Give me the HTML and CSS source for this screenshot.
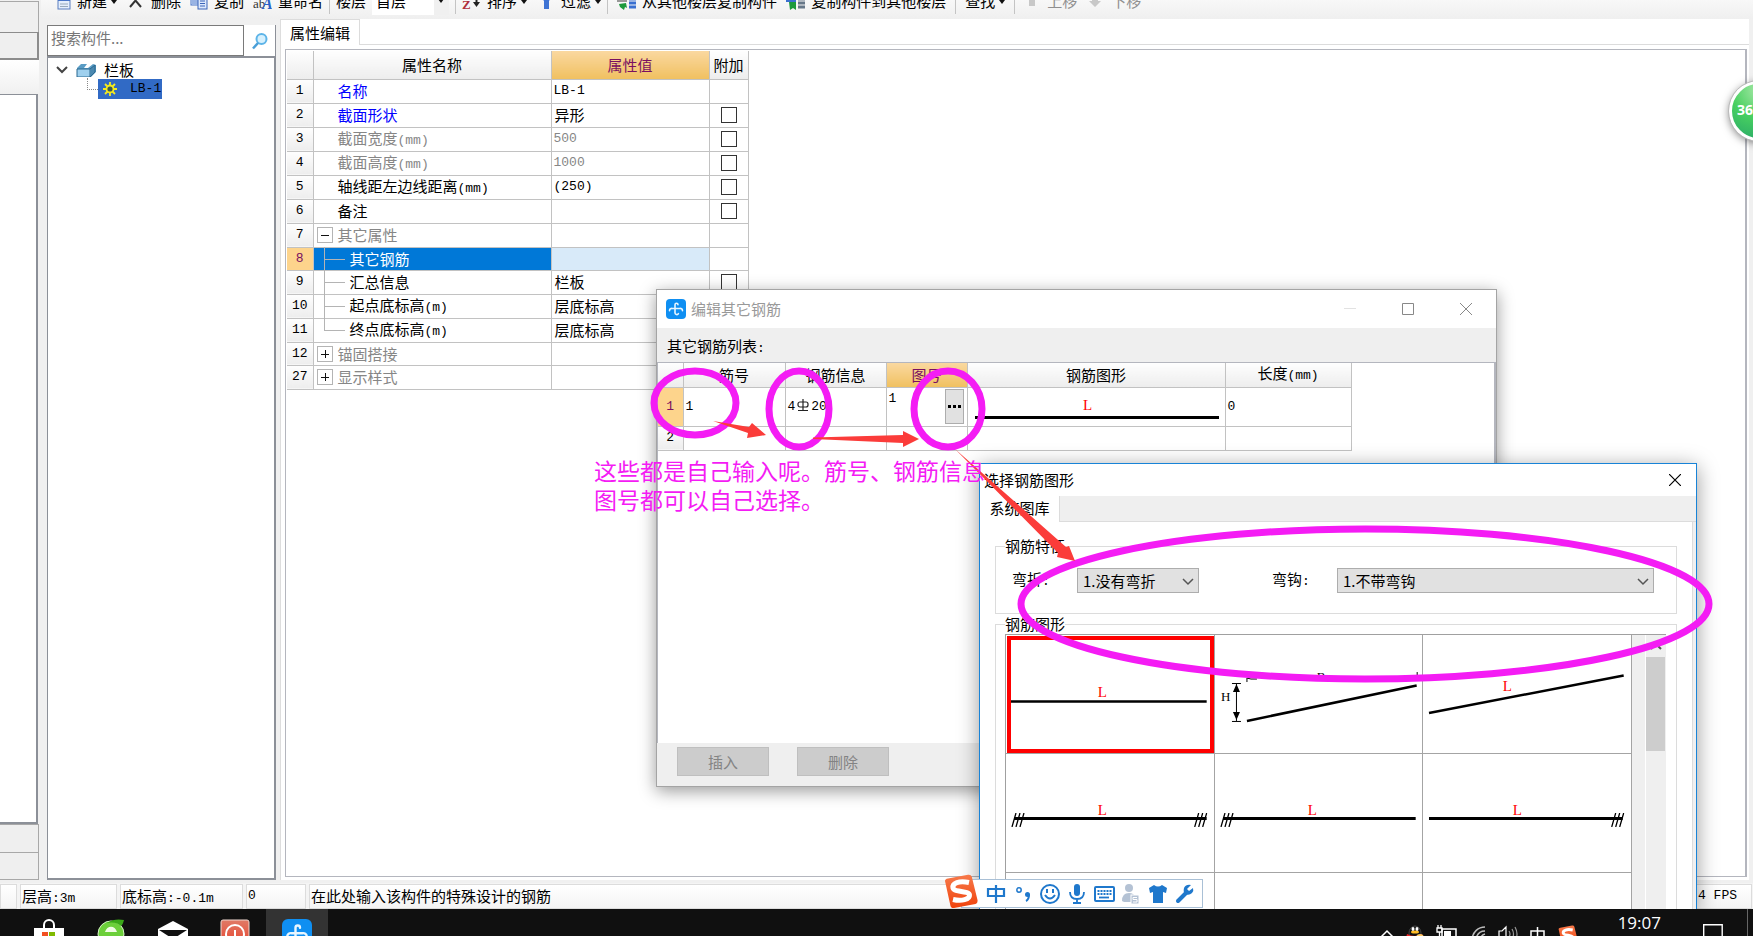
FILE: index.html
```html
<!DOCTYPE html>
<html lang="zh-CN">
<head>
<meta charset="utf-8">
<title>属性编辑</title>
<link rel="stylesheet" href="styles.css">
</head>
<body>
<svg class="defs" width="0" height="0" aria-hidden="true">
  <defs>
    <linearGradient id="sg" x1="0" y1="0" x2="0" y2="1"><stop offset="0" stop-color="#f7794a"/><stop offset="1" stop-color="#f0430c"/></linearGradient>
    <linearGradient id="rg" x1="0" y1="0" x2="0" y2="1"><stop offset="0" stop-color="#e07a66"/><stop offset="1" stop-color="#e8402a"/></linearGradient>
    <symbol id="caret" viewBox="0 0 6 4"><path d="M0 0h6L3 4z" fill="#111"/></symbol>
    <symbol id="chev" viewBox="0 0 12 8"><path d="M1 1l5 5 5-5" fill="none" stroke="#555" stroke-width="1.5"/></symbol>
    <symbol id="app" viewBox="0 0 20 20"><rect width="20" height="20" rx="4" fill="#0f8ff2"/><path d="M12 5.800a1.500 1.500 0 0 0-3 0V14a1.800 1.800 0 0 0 3.400 .6M3.500 11.800c0-2 1.500-2.600 3-2.300h7c1.500-.3 3 .3 3 2.300" fill="none" stroke="#e8f6ff" stroke-width="1.600" stroke-linecap="round"/></symbol>
    <symbol id="sogou" viewBox="0 0 34 34"><path d="M1 7Q1 5 4 4.500L24 .8q3-.5 3.800 2L33.500 26q.5 3-2 4L10 34q-3 .5-3.500-2z" fill="url(#sg)"/><path d="M25 8.500C15 6.500 8 9 9 14c1 4.500 16 2.500 16.500 7 .4 4.500-8 6.500-16.500 4.500" fill="none" stroke="#fff" stroke-width="5"/></symbol>
    <symbol id="hatch" viewBox="0 0 14 14"><path d="M1 14L5 0M5 14L9 0M9 14L13 0" stroke="#000" stroke-width="1.300" fill="none"/></symbol>
  </defs>
</svg>

<main class="main">
  <aside class="dock">
    <div class="dock-btn"></div>
    <div class="dock-btn dark"></div>
    <div class="dock-head"></div>
    <div class="dock-list"></div>
    <div class="dock-btn"></div>
    <div class="dock-btn"></div>
  </aside>

  <div class="work">
    <nav class="toolbar">
      <div class="tools">
        <button class="tool"><svg width="14" height="20" viewBox="0 0 14 20"><rect x="1" y="3" width="12" height="15" fill="#e4eefc" stroke="#5a7fc0"/><path d="M1 4h12v6H1z" fill="#4a76c8"/><path d="M3 13h8M3 15.500h8" stroke="#9ab"/></svg>新建<svg class="car" width="6" height="4"><use href="#caret"/></svg></button>
        <button class="tool"><svg width="19" height="16" viewBox="0 0 19 16"><path d="M4 14L15 1M4 1l11 13" stroke="#333" stroke-width="2"/></svg>删除</button>
        <button class="tool"><svg width="18" height="18" viewBox="0 0 18 18"><rect x="1" y="2" width="8" height="11" fill="#e7f0ff" stroke="#4a76c8"/><path d="M2 9h6M2 11h6" stroke="#4a76c8"/><rect x="8" y="5" width="9" height="12" fill="#dce8fc" stroke="#3a64b8"/><path d="M10 9h5M10 11.500h5M10 14h5" stroke="#3a64b8"/></svg>复制</button>
        <button class="tool"><svg width="19" height="18" viewBox="0 0 19 18"><text x="0" y="16" class="ic-ab">ab</text><text x="9" y="17" class="ic-a">A</text></svg>重命名</button>
        <span class="sep"></span>
        <label class="tool floor">楼层<select aria-label="楼层"><option>首层</option></select><svg class="floor-car" width="6" height="4"><use href="#caret"/></svg></label>
        <span class="sep"></span>
        <button class="tool"><svg width="19" height="18" viewBox="0 0 19 18"><text x="0" y="17" class="ic-z">Z</text><path d="M14.500 2v10" stroke="#222" stroke-width="2"/><path d="M11 10h7l-3.500 5z" fill="#222"/></svg>排序<svg class="car" width="6" height="4"><use href="#caret"/></svg></button>
        <button class="tool"><svg width="19" height="18" viewBox="0 0 19 18"><path d="M2 1h16l-5 8v8H8V9z" fill="#3f74d4"/></svg>过滤<svg class="car" width="6" height="4"><use href="#caret"/></svg></button>
        <span class="sep"></span>
        <button class="tool"><svg width="22" height="20" viewBox="0 0 22 20"><rect x="3" y="4" width="10" height="7" fill="#999"/><path d="M5 13l7-1 1 5-2-1-1 3-4-3z" fill="#1c9a3c"/><path d="M15 4h7M15 8h7M15 12h7M15 16h7" stroke="#3a70d0" stroke-width="3"/></svg>从其他楼层复制构件</button>
        <button class="tool"><svg width="19" height="20" viewBox="0 0 19 20"><rect x="0" y="4" width="10" height="7" fill="#3a70d0"/><path d="M3 11h7v8l-3-2-3 2z" fill="#1c9a3c"/><path d="M12 4h7M12 8h7M12 12h7M12 16h7" stroke="#667788" stroke-width="3"/></svg>复制构件到其他楼层</button>
        <span class="sep wide"></span>
        <button class="tool">查找<svg class="car" width="6" height="4"><use href="#caret"/></svg></button>
        <span class="sep wide"></span>
        <button class="tool off"><svg width="17" height="16" viewBox="0 0 17 16"><path d="M8 1l6 6h-3v6H5V7H2z" fill="#c8c8c8"/></svg>上移</button>
        <button class="tool off"><svg width="19" height="16" viewBox="0 0 19 16"><path d="M9 14l6-6h-3V2H6v6H3z" fill="#c8c8c8"/></svg>下移</button>
      </div>
    </nav>

    <div class="panels">
      <section class="tree">
        <div class="search">
          <input type="text" placeholder="搜索构件..." aria-label="搜索构件">
          <button aria-label="搜索"><svg width="18" height="18" viewBox="0 0 18 18"><circle cx="10.500" cy="7" r="5" fill="#d6f0fd" stroke="#5db4e8" stroke-width="2"/><path d="M7 11l-5 5.500" stroke="#4a9fd8" stroke-width="2.500"/></svg></button>
        </div>
        <ul class="nodes">
          <li class="node"><svg width="12" height="8" viewBox="0 0 12 8"><path d="M1 1l5 5 5-5" fill="none" stroke="#444" stroke-width="2"/></svg><svg width="20" height="14" viewBox="0 0 20 14"><path d="M1 5l4-4h6l-3 4h4l5-4 3 1v7l-5 5H1z" fill="#5a9cc4"/><path d="M1 6h13v8H1z" fill="#9fd0ee" stroke="#2a6890"/><path d="M14 6l5-4v7l-5 5" fill="#4a88b0" stroke="#2a6890"/></svg><span>栏板</span></li>
          <li class="node child"><i class="elbow"></i><span class="picked"><svg width="14" height="14" viewBox="0 0 14 14"><path d="M7 0v14M0 7h14M2 2l10 10M12 2L2 12" stroke="#f4ea20" stroke-width="1.800"/><circle cx="7" cy="7" r="3.500" fill="#3a5a50" stroke="#f4ea20" stroke-width="1.800"/></svg><b class="lat">LB-1</b></span></li>
        </ul>
      </section>

      <section class="props">
        <div class="tabs"><button class="tab">属性编辑</button></div>
        <div class="sheet">
          <table class="grid attr">
            <colgroup><col class="c-no"><col class="c-name"><col class="c-val"><col class="c-add"></colgroup>
            <thead><tr><th></th><th>属性名称</th><th class="hot">属性值</th><th>附加</th></tr></thead>
            <tbody>
              <tr><th class="lat">1</th><td class="nm blue">名称</td><td class="lat">LB-1</td><td></td></tr>
              <tr><th class="lat">2</th><td class="nm blue">截面形状</td><td>异形</td><td class="ck"><input type="checkbox" aria-label="截面形状"></td></tr>
              <tr><th class="lat">3</th><td class="nm gray">截面宽度<span class="lat">(mm)</span></td><td class="lat gray">500</td><td class="ck"><input type="checkbox" aria-label="截面宽度"></td></tr>
              <tr><th class="lat">4</th><td class="nm gray">截面高度<span class="lat">(mm)</span></td><td class="lat gray">1000</td><td class="ck"><input type="checkbox" aria-label="截面高度"></td></tr>
              <tr><th class="lat">5</th><td class="nm">轴线距左边线距离<span class="lat">(mm)</span></td><td class="lat">(250)</td><td class="ck"><input type="checkbox" aria-label="轴线距左边线距离"></td></tr>
              <tr><th class="lat">6</th><td class="nm">备注</td><td></td><td class="ck"><input type="checkbox" aria-label="备注"></td></tr>
              <tr><th class="lat">7</th><td class="nm gray"><button class="exp minus" aria-label="折叠"></button>其它属性</td><td></td><td></td></tr>
              <tr class="cur"><th class="lat">8</th><td class="nm sub">其它钢筋</td><td class="soft"></td><td></td></tr>
              <tr><th class="lat">9</th><td class="nm sub">汇总信息</td><td>栏板</td><td class="ck"><input type="checkbox" aria-label="汇总信息"></td></tr>
              <tr><th class="lat">10</th><td class="nm sub">起点底标高<span class="lat">(m)</span></td><td>层底标高</td><td></td></tr>
              <tr><th class="lat">11</th><td class="nm sub last">终点底标高<span class="lat">(m)</span></td><td>层底标高</td><td></td></tr>
              <tr><th class="lat">12</th><td class="nm gray"><button class="exp plus" aria-label="展开"></button>锚固搭接</td><td></td><td></td></tr>
              <tr><th class="lat">27</th><td class="nm gray"><button class="exp plus" aria-label="展开"></button>显示样式</td><td></td><td></td></tr>
            </tbody>
          </table>
        </div>
      </section>
    </div>
  </div>
</main>

<footer class="status">
  <span class="st s0"></span>
  <span class="st s1">层高<span class="lat">:3m</span></span>
  <span class="st s2">底标高<span class="lat">:-0.1m</span></span>
  <span class="st s3 lat">0</span>
  <span class="st s4"><span>在此处输入该构件的特殊设计的钢筋</span><span class="lat">4 FPS</span></span>
</footer>

<footer class="taskbar">
  <div class="apps">
    <button class="app-btn" aria-label="应用商店"><svg width="30" height="32" viewBox="0 0 30 32"><path d="M10 9V6a5 5 0 0 1 10 0v3" fill="none" stroke="#fff" stroke-width="2"/><path d="M0 9h30v20H0z" fill="#fff"/><path d="M8 13h6v6H8z" fill="#f25022"/><path d="M15 13h6v6h-6z" fill="#7fba00"/></svg></button>
    <button class="app-btn" aria-label="浏览器"><svg width="30" height="32" viewBox="0 0 30 32"><circle cx="15" cy="15" r="13" fill="#6ccf3a" stroke="#d8f5c8" stroke-width="1"/><path d="M9 13c2-7 10-7 12 0zM8 17h19v3H11c2 4 8 5 12 2" fill="#f0fce4"/><path d="M10 4C17 0 23 0 28 1c-1 4-2 5-3 6-4-4-9-4-15-3z" fill="#3aa818"/></svg></button>
    <button class="app-btn" aria-label="邮件"><svg width="30" height="32" viewBox="0 0 30 32"><path d="M0 10L15 2l15 8v17H0z" fill="#fff"/><path d="M1 11h28l-14 9z" fill="#101010"/></svg></button>
    <button class="app-btn" aria-label="电源"><svg width="30" height="32" viewBox="0 0 30 32"><rect x="1" y="1" width="28" height="28" rx="2" fill="url(#rg)" stroke="#f0d8d0"/><circle cx="15" cy="15" r="9" fill="none" stroke="#fff" stroke-width="2"/><path d="M15 11v8" stroke="#fff" stroke-width="2"/></svg></button>
    <button class="app-btn on" aria-label="广联达"><svg width="30" height="30"><use href="#app"/></svg></button>
  </div>
  <div class="tray">
    <svg width="14" height="10" viewBox="0 0 14 10"><path d="M1 8l6-6 6 6" fill="none" stroke="#fff" stroke-width="1.500"/></svg>
    <svg width="18" height="20" viewBox="0 0 18 20"><ellipse cx="9" cy="8" rx="6" ry="7" fill="#111" stroke="#444"/><ellipse cx="7" cy="4" rx="1.500" ry="2" fill="#fff"/><ellipse cx="11" cy="4" rx="1.500" ry="2" fill="#fff"/><path d="M1 9q8 4 15 0l1 4H0z" fill="#e22"/><ellipse cx="9" cy="7" rx="4" ry="1.500" fill="#fb2"/><circle cx="14" cy="13" r="4" fill="#fc6"/></svg>
    <svg width="22" height="18" viewBox="0 0 22 18"><path d="M6 4h14v10H6z" fill="none" stroke="#fff" stroke-width="1.500"/><path d="M8 6h7v8H8z" fill="#fff"/><path d="M1 3h5v4H1zM2 0v3M5 0v3M3.500 7v6" fill="none" stroke="#fff" stroke-width="1.300"/></svg>
    <svg width="16" height="18" viewBox="0 0 16 18"><path d="M2 14C3 7 8 2 15 2M6 14c1-5 4-8 9-8M10 14c1-3 2-4 5-5" fill="none" stroke="#bbb" stroke-width="1.500"/></svg>
    <svg width="20" height="18" viewBox="0 0 20 18"><path d="M1 6h3l4-4v14l-4-4H1z" fill="none" stroke="#fff" stroke-width="1.200"/><path d="M11 6q2 3 0 6M14 4q3 5 0 10M17 2q4 7 0 14" fill="none" stroke="#999" stroke-width="1.200"/></svg>
    <svg width="16" height="20" viewBox="0 0 16 20"><path d="M1 6h13v7H1zM7.500 2v16" fill="none" stroke="#fff" stroke-width="1.500"/></svg>
    <svg width="20" height="20"><use href="#sogou"/></svg>
    <time>19:07</time>
    <svg class="note" width="20" height="20" viewBox="0 0 20 20"><path d="M.7.700h18.500V16H.7z" fill="none" stroke="#fff" stroke-width="1.400"/></svg>
    <i class="peek"></i>
  </div>
</footer>

<section class="win rebar">
  <header class="title"><svg width="20" height="20"><use href="#app"/></svg><span>编辑其它钢筋</span>
    <div class="ctl"><button aria-label="最小化"><svg width="12" height="12"><path d="M0 5.500h12" stroke="#e2e2e2"/></svg></button><button aria-label="最大化"><svg width="12" height="12"><path d="M.5.500h11v11H.5z" fill="none" stroke="#888"/></svg></button><button aria-label="关闭"><svg width="12" height="12"><path d="M0 0l12 12M12 0L0 12" stroke="#888"/></svg></button></div>
  </header>
  <p class="caption">其它钢筋列表<span class="lat">:</span></p>
  <div class="pane">
    <table class="grid bars">
      <colgroup><col class="b0"><col class="b1"><col class="b2"><col class="b3"><col class="b4"><col class="b5"></colgroup>
      <thead><tr><th></th><th>筋号</th><th>钢筋信息</th><th class="hot">图号</th><th>钢筋图形</th><th>长度<span class="lat">(mm)</span></th></tr></thead>
      <tbody>
        <tr class="tall cur"><th class="lat">1</th><td class="lat">1</td><td class="lat">4<svg class="phi" width="14" height="14" viewBox="0 0 14 14"><rect x="2" y="4" width="10" height="5" rx="2" fill="none" stroke="#222" stroke-width="1.200"/><path d="M7 1v12M2 12.500h10" stroke="#222" stroke-width="1.200"/></svg>20</td><td class="pick lat"><div>1<button aria-label="选择图号"><svg width="13" height="3" viewBox="0 0 13 3"><path d="M0 0h3v3H0zM5 0h3v3H5zM10 0h3v3h-3z"/></svg></button></div></td>
          <td class="draw"><svg width="100%" height="38" viewBox="0 0 257 38"><text x="115" y="22" class="lred">L</text><path d="M7 29.500h244" stroke="#000" stroke-width="3"/></svg></td><td class="lat">0</td></tr>
        <tr><th class="lat">2</th><td></td><td></td><td></td><td></td><td></td></tr>
      </tbody>
    </table>
  </div>
  <footer class="acts"><button disabled>插入</button><button disabled>删除</button></footer>
</section>

<section class="win shapes">
  <header class="title"><span>选择钢筋图形</span><div class="ctl"><button aria-label="关闭"><svg width="12" height="12"><path d="M0 0l12 12M12 0L0 12" stroke="#000" stroke-width="1.200"/></svg></button></div></header>
  <div class="tabs2"><button class="tab2">系统图库</button></div>
  <div class="page">
    <fieldset><legend>钢筋特征</legend>
      <div class="feat">
      <label for="bend">弯折<span class="lat">:</span></label>
      <span class="sel s-bend"><select id="bend"><option>1.没有弯折</option></select><svg width="12" height="8"><use href="#chev"/></svg></span>
      <label for="hook" class="hook">弯钩<span class="lat">:</span></label>
      <span class="sel s-hook"><select id="hook"><option>1.不带弯钩</option></select><svg width="12" height="8"><use href="#chev"/></svg></span>
      </div>
    </fieldset>
    <fieldset class="figs"><legend>钢筋图形</legend>
      <div class="gallery">
        <div class="cells">
          <div class="cell sel-cell"><svg viewBox="0 0 208 118"><text x="92" y="62" class="lred">L</text><path d="M5 66.500h196" stroke="#000" stroke-width="2.500"/></svg></div>
          <div class="cell"><svg viewBox="0 0 208 118"><text x="6" y="66" class="lblk">H</text><path d="M21.500 49v37M17 48.500h9M17 86.500h9M32 47V43l4 1h6M202.500 37v9" stroke="#000" fill="none"/><path d="M18 57h7l-3.500-8zM18 77h7l-3.500 8z"/><text x="102" y="46" class="lblk">B</text><path d="M32 86L202 50.500" stroke="#000" stroke-width="2.500"/></svg></div>
          <div class="cell"><svg viewBox="0 0 208 118"><text x="80" y="56" class="lred">L</text><path d="M6 78L201 40.500" stroke="#000" stroke-width="2.500"/></svg></div>
          <div class="cell"><svg viewBox="0 0 208 118"><text x="92" y="61" class="lred">L</text><path d="M8 64.500h193" stroke="#000" stroke-width="3"/><use href="#hatch" x="5" y="59" width="14" height="14"/><use href="#hatch" x="188" y="59" width="14" height="14"/></svg></div>
          <div class="cell"><svg viewBox="0 0 208 118"><text x="93" y="61" class="lred">L</text><path d="M8 64.500h193" stroke="#000" stroke-width="3"/><use href="#hatch" x="5" y="59" width="14" height="14"/></svg></div>
          <div class="cell"><svg viewBox="0 0 208 118"><text x="90" y="61" class="lred">L</text><path d="M6 64.500h194" stroke="#000" stroke-width="3"/><use href="#hatch" x="188" y="59" width="14" height="14"/></svg></div>
          <div class="cell"></div><div class="cell"></div><div class="cell"></div>
        </div>
        <div class="gutter"></div>
        <div class="scroll"><svg width="12" height="8" viewBox="0 0 12 8"><path d="M1 7l5-5 5 5" fill="none" stroke="#555" stroke-width="2"/></svg><i></i></div>
      </div>
    </fieldset>
  </div>
</section>

<div class="ime">
  <svg class="logo" width="34" height="34"><use href="#sogou"/></svg>
  <svg width="22" height="22" viewBox="0 0 22 22"><path d="M3 6h16v7H3zM11 2v18" fill="none" stroke="#1f78cc" stroke-width="2.200"/></svg>
  <svg width="22" height="22" viewBox="0 0 22 22"><circle cx="7" cy="7" r="2.200" fill="none" stroke="#1f78cc" stroke-width="1.500"/><circle cx="15.500" cy="11.500" r="2.500" fill="#1f78cc"/><path d="M17 11.500q0 5-3 6.500" fill="none" stroke="#1f78cc" stroke-width="2"/></svg>
  <svg width="22" height="22" viewBox="0 0 22 22"><circle cx="11" cy="11" r="9" fill="none" stroke="#1f78cc" stroke-width="2"/><path d="M8 6v4M14 6v4M6 12q5 7 10 0" fill="none" stroke="#1f78cc" stroke-width="2"/></svg>
  <svg width="22" height="22" viewBox="0 0 22 22"><rect x="8" y="1" width="6" height="12" rx="3" fill="#1f78cc"/><path d="M4 9q0 7 7 7t7-7M11 16v4M7 20h8" fill="none" stroke="#1f78cc" stroke-width="1.800"/></svg>
  <svg width="22" height="22" viewBox="0 0 22 22"><rect x="2" y="4" width="19" height="14" rx="1" fill="none" stroke="#1f78cc" stroke-width="2"/><path d="M4.500 8h14M4.500 11h14" stroke="#1f78cc" stroke-width="1.800" stroke-dasharray="2 1"/><path d="M6 14.500h10" stroke="#1f78cc" stroke-width="1.800"/></svg>
  <svg width="22" height="22" viewBox="0 0 22 22"><circle cx="9" cy="5" r="4" fill="#b4c2d4"/><path d="M2 18q0-8 7-8 5 0 6 4v5H4z" fill="#b4c2d4"/><rect x="11" y="12" width="8" height="9" fill="#b4c2d4" stroke="#fff"/><path d="M17 14.500h-4v2h4v2.500h-4" fill="none" stroke="#fff"/></svg>
  <svg width="22" height="22" viewBox="0 0 22 22"><path d="M7 2q4 3 8 0l5 3-1 5-3-1v11H6V9l-3 1-1-5z" fill="#1f78cc"/></svg>
  <svg width="22" height="22" viewBox="0 0 22 22"><path d="M4 18l8-8" stroke="#1f78cc" stroke-width="4" stroke-linecap="round"/><path d="M17 2q-5-1-7 3-1 4 1 6 4 2 7-1 2-2 1-5l-4 3-2-2z" fill="#1f78cc"/></svg>
</div>

<div class="ball">36</div>

<svg class="marks" width="1753" height="936" viewBox="0 0 1753 936" aria-hidden="true">
  <g fill="none" stroke="#f41cf4" stroke-width="7">
    <ellipse cx="695" cy="403" rx="41" ry="32"/>
    <ellipse cx="799" cy="409" rx="30" ry="38"/>
    <ellipse cx="948" cy="409" rx="34" ry="38"/>
    <ellipse cx="1365" cy="604" rx="344" ry="75"/>
  </g>
  <g fill="#fb3c3a">
    <path d="M713 421l36 6 3-4 14 12-19 3 1-5z"/>
    <path d="M813 437.500l90-2.500v-4l16 8-16 8v-4l-90-4z"/>
    <path d="M955 449L1066 547l3-1 6 15-18-4 1-4z"/>
  </g>
</svg>
<p class="memo">这些都是自己输入呢。筋号、钢筋信息<br>图号都可以自己选择。</p>
</body>
</html>
```
FILE: styles.css
```css
* { box-sizing: border-box; }
html, body { height: 100%; }
body {
  margin: 0;
  display: flex;
  flex-direction: column;
  position: relative;
  overflow: hidden;
  background: #f0f0f0;
  color: #000;
  font: 15px/20px "Noto Sans CJK SC", sans-serif;
}
button, input, select { font: inherit; color: inherit; }
button { padding: 0; border: 0; background: none; }
p, ul, fieldset { margin: 0; padding: 0; list-style: none; }
svg { display: block; flex: none; }
.defs { position: absolute; }
.lat { font-family: "Liberation Mono", "Noto Sans CJK SC", monospace; font-size: 13px; font-weight: 400; white-space: nowrap; }

.main { flex: 1; min-height: 0; display: flex; }

/* left dock */
.dock { width: 41px; display: flex; flex-direction: column; padding: 1px 2px 3px 0; }
.dock-btn { height: 28px; flex: none; border: solid #a8a8a8; border-width: 1px 1px 0 0; background: #efefef; }
.dock-btn:first-child { height: 31px; }
.dock-btn.dark { border: 2px solid #8c8c8c; border-left: 0; border-top-width: 1px; }
.dock-btn:last-child { border-bottom-width: 1px; }
.dock-head { height: 34px; flex: none; background: linear-gradient(#fff, #f0f0f0); }
.dock-list { flex: 1; margin-right: 1px; background: #fff; border: solid #8c9098; border-width: 1px 2px 2px 0; }

.work { flex: 1; min-width: 0; display: flex; flex-direction: column; }

/* toolbar */
.toolbar { height: 19px; flex: none; overflow: hidden; padding-left: 16px; background: linear-gradient(#f8f8f8, #efefef); }
.tools { display: flex; align-items: center; gap: 9px; height: 20px; margin-top: -9px; }
.tool { display: flex; align-items: center; gap: 6px; white-space: nowrap; flex: none; }
.tool .car { margin: 2px 0 0 -2px; }
.tool.off { color: #8f8f8f; }
.sep { width: 1px; height: 26px; flex: none; margin: 0 -3px; background: #c4c4c4; }
.sep.wide { margin: 0; }
.floor { position: relative; }
.floor select { appearance: none; width: 77px; height: 28px; padding: 0 4px; border: 0; background: linear-gradient(90deg, #fff 62px, #f0f0f0 62px); }
.floor-car { position: absolute; right: 5px; }
.ic-ab { font: 13px "Liberation Serif", serif; fill: #333; }
.ic-a { font: italic bold 16px "Liberation Serif", serif; fill: #2a62c8; }
.ic-z { font: bold 13px "Liberation Serif", serif; fill: #b0303c; }

/* component tree */
.panels { flex: 1; min-height: 0; display: flex; }
.tree { width: 229px; flex: none; margin: 6px 4px 3px 6px; display: flex; flex-direction: column; }
.search { display: flex; height: 31px; }
.search input { flex: 1; min-width: 0; border: 1px solid #7a7a7a; padding: 0 3px 5px; background: #fff; }
.search input::placeholder { color: #777; opacity: 1; }
.search button { width: 32px; display: grid; place-items: center; background: #fff; border-right: 1px solid #8c9098; }
.nodes { flex: 1; background: #fff; border: solid #8c9098; border-width: 2px 2px 2px 1px; padding: 2px 0 0 8px; }
.node { display: flex; align-items: center; gap: 8px; height: 19px; }
.child { padding-left: 31px; gap: 0; }
.elbow { width: 11px; height: 12px; margin-top: -10px; border: dotted #888; border-width: 0 0 1px 1px; }
.picked { display: flex; align-items: center; gap: 13px; width: 64px; height: 20px; padding-left: 5px; background: #316ac5; }

/* property sheet */
.props { flex: 1; min-width: 0; margin: 0 4px 3px 0; display: flex; flex-direction: column; background: #fff; border-left: 1px solid #ddd; }
.tabs { height: 26px; flex: none; display: flex; }
.tabs::after { content: ""; flex: 1; border: solid #dcdcdc; border-width: 0 0 1px 1px; }
.tab { width: 78px; text-align: center; border-top: 1px solid #dcdcdc; }
.sheet { flex: 1; margin: 4px 2px 3px 4px; padding: 1px; border: 1px solid #b4b6be; border-right-width: 2px; }

.grid { border-collapse: collapse; table-layout: fixed; }
.grid th, .grid td { border: 1px solid #c2c2c2; padding: 0 3px; text-align: left; font-weight: 400; line-height: 20px; white-space: nowrap; overflow: visible; }
.grid th { text-align: center; padding: 0; background: linear-gradient(#fefefe, #ededed); }
.grid td.lat { padding-left: 2px; }
.grid thead th { border-top: 0; }
.grid th:first-child { border-left: 0; }
.grid th.hot { color: #7a1060; background: linear-gradient(#fad8a0, #f0c060); }
.grid .cur th { color: #7a1060; background: #fdd48c; }
.attr { width: 461px; }
.attr thead tr { height: 28px; }
.attr tbody tr { height: 24px; }
.attr tbody tr:nth-child(4n) { height: 23px; }
.attr th, .attr td { height: inherit; }
.c-no { width: 26px; } .c-name { width: 238px; } .c-val { width: 158px; } .c-add { width: 39px; }
.grid td.nm { position: relative; padding-left: 24px; }
.blue { color: #00f; }
.grid .gray { color: #868686; }
.grid td.sub { padding-left: 36px; }
.sub::before { content: ""; position: absolute; left: 10px; top: -1px; bottom: -1px; width: 1px; background: #b4b4b4; }
.sub::after { content: ""; position: absolute; left: 10px; top: 50%; width: 21px; height: 1px; background: #b4b4b4; }
.sub.last::before { bottom: 50%; }
.cur .nm { background: #0078d7; color: #fff; }
.soft { background: #d8eaf9; }
.attr td.ck { text-align: center; line-height: 0; padding: 0; }
.ck input { appearance: none; width: 16px; height: 16px; margin: 0; border: 1px solid #333; background: #fff; }
.exp { position: absolute; left: 3px; top: 3px; width: 16px; height: 16px; border: 1px solid #b4b4b4; background: #fff; }
.exp::before { content: ""; position: absolute; left: 3px; right: 3px; top: 7px; height: 1px; background: #111; }
.plus::after { content: ""; position: absolute; top: 3px; bottom: 3px; left: 7px; width: 1px; background: #111; }

/* status bar */
.status { height: 26px; flex: none; display: flex; gap: 3px; padding: 1px 1px 0 0; background: #f4f4f4; }
.st { border: 1px solid #dcdcdc; padding: 0 1px; line-height: 22px; white-space: nowrap; background: linear-gradient(#fff, #f4f4f4); }
.s0 { width: 17px; } .s1 { width: 97px; } .s2 { width: 123px; } .s3 { width: 60px; }
.s4 { flex: 1; display: flex; justify-content: space-between; padding-right: 14px; }

/* taskbar */
.taskbar { height: 27px; flex: none; position: relative; z-index: 5; display: flex; justify-content: space-between; background: #101010; overflow: hidden; color: #fff; }
.apps { display: flex; padding-left: 18px; }
.app-btn { width: 62px; padding-top: 10px; display: flex; justify-content: center; align-items: flex-start; }
.app-btn.on { background: #333; }
.tray { display: flex; align-items: flex-start; gap: 12px; padding: 16px 5px 0 0; }
.tray svg:first-child { margin-top: 4px; }
time { margin: -12px 30px 0 28px; font: 17px/20px "Open Sans", sans-serif; }
.tray .note { margin: -1px 12px 0 0; }
.peek { width: 1px; height: 30px; margin-top: -16px; background: #666; }

/* floating windows */
.win { position: absolute; display: flex; flex-direction: column; background: #fff; }
.title { display: flex; align-items: center; flex: none; gap: 5px; }
.ctl { margin-left: auto; display: flex; gap: 46px; }
.rebar { left: 656px; top: 289px; width: 841px; height: 498px; border: 1px solid #a4a4a4; box-shadow: 0 4px 16px rgba(0,0,0,.4); }
.rebar .title { height: 38px; padding: 0 24px 0 9px; color: #999; }
.caption { height: 34px; flex: none; padding: 8px 10px 0; background: #efefef; }
.pane { flex: 1; border: solid #b4b6be; border-width: 1px 2px 0 1px; }
.bars { width: 693px; }
.bars tr { height: 24px; }
.bars .tall { height: 39px; }
.b0 { width: 25px; } .b1 { width: 102px; } .b2 { width: 101px; } .b3 { width: 81px; } .b4 { width: 258px; } .b5 { width: 126px; }
.phi { display: inline-block; vertical-align: -2px; margin: 0 1px; }
.pick div { display: flex; justify-content: space-between; height: 35px; }
.pick button { width: 19px; display: grid; place-items: center; border: 1px solid #adadad; background: #e1e1e1; }
.bars td.draw { padding: 0; }
.acts { height: 43px; flex: none; display: flex; gap: 28px; padding: 4px 20px 10px; background: #efefef; }
.acts button { width: 92px; background: #ccc; border: 1px solid #bfbfbf; color: #838383; }

.shapes { left: 979px; top: 463px; bottom: 27px; width: 718px; border: 1px solid #1883d7; border-bottom: 0; box-shadow: 0 4px 20px rgba(0,0,0,.4); }
.shapes .title { height: 32px; padding: 0 15px 0 4px; }
.tabs2 { height: 26px; flex: none; display: flex; }
.tabs2::after { content: ""; flex: 1; background: #efefef; border: solid #dcdcdc; border-width: 0 0 1px 1px; }
.tab2 { width: 79px; line-height: 24px; padding-bottom: 2px; }
.page { flex: 1; min-height: 0; margin-right: 3px; padding: 14px 15px 0 15px; border-right: 1px solid #dcdcdc; display: flex; flex-direction: column; box-shadow: 3px 0 0 #f0f0f0; overflow: hidden; }
fieldset { border: 1px solid #dcdcdc; min-width: 0; flex: none; padding-left: 9px; }
legend { padding: 0; line-height: 20px; }
.feat { height: 57px; display: flex; align-items: center; padding: 0 22px 10px 7px; margin-top: 0; }
.feat { padding-top: 2px; }
.feat label { width: 65px; flex: none; }
.feat .hook { margin-left: 73px; }
.sel { position: relative; flex: none; width: 122px; height: 25px; }
.s-hook { flex: 1; }
.sel select { appearance: none; width: 100%; height: 100%; padding: 0 5px; border: 1px solid #adadad; border-radius: 0; background: #e1e1e1; }
.sel svg { position: absolute; right: 5px; top: 10px; }
.figs { flex: 1; min-height: 0; border-bottom: 0; padding: 0 10px 0 9px; }
.gallery { display: flex; height: 290px; border-top: 1px solid #a0a0a0; border-left: 1px solid #a0a0a0; }
.cells { flex: 1; display: grid; grid-template-columns: repeat(3, 1fr); grid-auto-rows: 119px; }
.cell { border: solid #a4a4a4; border-width: 0 1px 1px 0; position: relative; }
.cell svg { width: 100%; height: 100%; }
.sel-cell::after { content: ""; position: absolute; inset: 1px 0 0 1px; border: 4px solid #f00; }
.gutter { width: 14px; background: #efefef; border-right: 1px solid #fff; }
.scroll { width: 20px; background: #efefef; padding: 7px 1px 0 0; }
.scroll svg { margin: 0 auto 7px; }
.scroll i { display: block; height: 94px; background: #cdcdcd; }
.lred, .lblk { font: 15px "Liberation Serif", serif; fill: #f00; }
.lblk { font-size: 13px; fill: #000; }

/* input method bar */
.ime { position: absolute; left: 961px; top: 879px; width: 242px; height: 29px; display: flex; align-items: center; gap: 5px; padding-left: 23px; background: #fff; border: 1px solid #a9c0d6; z-index: 4; }
.ime .logo { position: absolute; left: -18px; top: -6px; }

.ball { position: absolute; left: 1729px; top: 81px; width: 60px; height: 60px; border-radius: 50%; padding-left: 5px; border: 3px solid #fff; outline: 1px solid #bbb; background: radial-gradient(circle at 50% 10%, #a8e8a8, #48d060 50%, #28a868); box-shadow: 0 2px 8px rgba(0,0,0,.5); color: #fff; font: bold 14px/52px "Open Sans", sans-serif; }

/* notes drawn over the desktop */
.marks { position: absolute; left: 0; top: 0; z-index: 6; }
.memo { position: absolute; left: 594px; top: 456px; z-index: 6; color: #f41cf4; font-size: 23px; line-height: 29px; white-space: nowrap; }
```
